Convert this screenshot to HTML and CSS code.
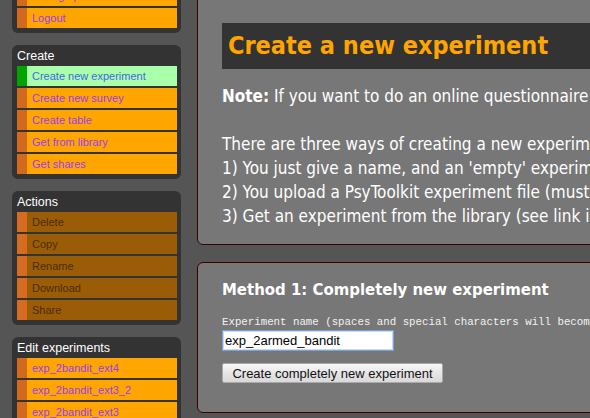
FILE: index.html
```html
<!DOCTYPE html>
<html>
<head>
<meta charset="utf-8">
<link rel="stylesheet" href="styles.css">
</head>
<body>
<div class="page">
  <nav class="sidebar">
    <div class="box">
      <div class="box-title">Account</div>
      <a class="item">Change password</a>
      <a class="item">Logout</a>
    </div>
    <div class="box">
      <div class="box-title">Create</div>
      <a class="item active">Create new experiment</a>
      <a class="item">Create new survey</a>
      <a class="item">Create table</a>
      <a class="item">Get from library</a>
      <a class="item">Get shares</a>
    </div>
    <div class="box">
      <div class="box-title">Actions</div>
      <span class="item disabled">Delete</span>
      <span class="item disabled">Copy</span>
      <span class="item disabled">Rename</span>
      <span class="item disabled">Download</span>
      <span class="item disabled">Share</span>
    </div>
    <div class="box">
      <div class="box-title">Edit experiments</div>
      <a class="item">exp_2bandit_ext4</a>
      <a class="item">exp_2bandit_ext3_2</a>
      <a class="item">exp_2bandit_ext3</a>
      <a class="item">exp_2bandit_ext2</a>
    </div>
  </nav>
  <main class="main">
    <section class="panel intro">
      <h1 class="title">Create a new experiment</h1>
      <p class="text"><b>Note:</b> If you want to do an online questionnaire (survey), use "Create new survey" instead.<br><br>There are three ways of creating a new experiment:<br>1) You just give a name, and an 'empty' experiment will be created.<br>2) You upload a PsyToolkit experiment file (must be a zip file).<br>3) Get an experiment from the library (see link in the menu).</p>
    </section>
    <section class="panel method">
      <h2 class="method-title">Method 1: Completely new experiment</h2>
      <label class="label">Experiment name (spaces and special characters will become underscores):</label>
      <input class="name-input" type="text" value="exp_2armed_bandit">
      <button class="btn">Create completely new experiment</button>
    </section>
  </main>
</div>
</body>
</html>
```

FILE: styles.css
```css
html, body {
  margin: 0;
  padding: 0;
}
body {
  background: #555555;
  overflow: hidden;
  width: 590px;
  height: 418px;
}
.page {
  display: flex;
  align-items: flex-start;
  width: 900px;
}
.sidebar {
  width: 169px;
  margin: -35px 0 0 12px;
  display: flex;
  flex-direction: column;
  gap: 12px;
  flex-shrink: 0;
}
.box {
  background: #333333;
  border-radius: 6px;
  padding: 4px 4px 5px 5px;
  display: flex;
  flex-direction: column;
  gap: 2px;
}
.box-title {
  font-family: "Liberation Sans", Arial, sans-serif;
  font-size: 12.5px;
  line-height: 15px;
  height: 15px;
  color: #ffffff;
}
.item {
  display: block;
  height: 20px;
  line-height: 20px;
  background: #ffa500;
  border-left: 10px solid #d2691e;
  padding-left: 5px;
  font-family: "Liberation Sans", Arial, sans-serif;
  font-size: 11px;
  color: #9b3cf0;
  white-space: nowrap;
  overflow: hidden;
}
.item.active {
  background: #aaffaa;
  border-left-color: #00a300;
  color: #4466e6;
}
.item.disabled {
  background: #9a5c07;
  border-left-color: #d66c22;
  color: #4d2c06;
}
.main {
  margin: -18px 0 0 16px;
  width: 620px;
  display: flex;
  flex-direction: column;
  gap: 17px;
  flex-shrink: 0;
}
.panel {
  background: #777777;
  border: 1px solid #3d0000;
  border-radius: 6px;
  padding: 0 24px;
  white-space: nowrap;
  overflow: hidden;
}
.intro {
  padding-top: 40px;
  padding-bottom: 16px;
}
.title {
  margin: 0 0 15px 0;
  height: 46px;
  line-height: 46px;
  background: #333333;
  color: #ffa500;
  padding-left: 6px;
  font-family: "DejaVu Sans Condensed", "DejaVu Sans", sans-serif;
  font-stretch: condensed;
  font-weight: bold;
  font-size: 25px;
}
.text {
  margin: 0;
  color: #ffffff;
  font-family: "DejaVu Sans Condensed", "DejaVu Sans", sans-serif;
  font-stretch: condensed;
  font-size: 17px;
  line-height: 24px;
}
.method {
  padding-top: 17px;
  padding-bottom: 29px;
  display: flex;
  flex-direction: column;
  align-items: flex-start;
}
.method-title {
  margin: 0 0 15px 0;
  color: #ffffff;
  font-family: "DejaVu Sans Condensed", "DejaVu Sans", sans-serif;
  font-stretch: condensed;
  font-weight: bold;
  font-size: 16.6px;
  line-height: 20px;
}
.label {
  display: block;
  color: #f2f2f2;
  font-family: "Liberation Mono", "DejaVu Sans Mono", monospace;
  font-size: 10.75px;
  line-height: 14px;
}
.name-input {
  margin: 1px 0 0 0;
  box-sizing: border-box;
  width: 172px;
  height: 21px;
  border: 1px solid #7aa0d8;
  outline: 1px solid #c9d9f0;
  outline-offset: -2px;
  background: #ffffff;
  padding: 0 2px;
  font-family: "Liberation Sans", Arial, sans-serif;
  font-size: 13px;
  color: #000000;
}
.btn {
  margin-top: 12px;
  box-sizing: border-box;
  width: 221px;
  height: 20px;
  padding: 0;
  border: 1px solid #a9a9a9;
  border-radius: 2px;
  background: linear-gradient(#f8f8f8, #e6e6e6 50%, #d9d9d9);
  font-family: "Liberation Sans", Arial, sans-serif;
  font-size: 13px;
  color: #111111;
}
```
